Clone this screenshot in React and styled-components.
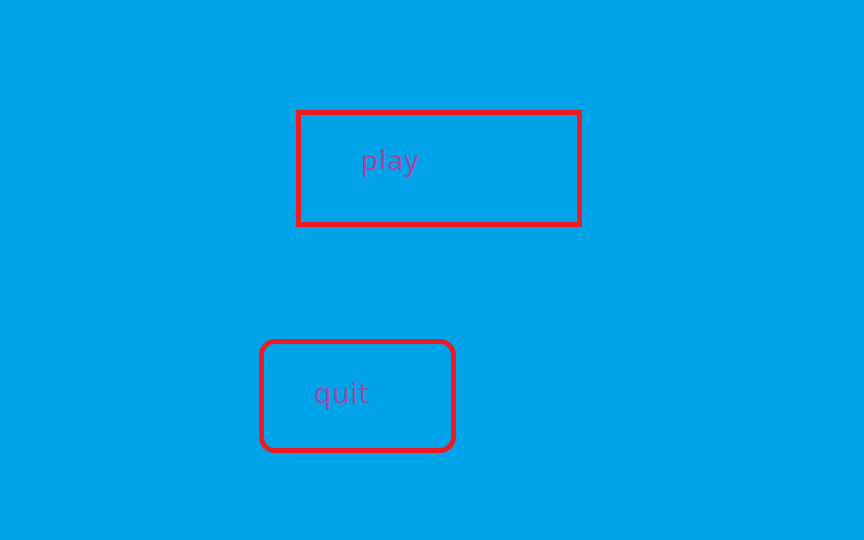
import React from "react";
import styled, { createGlobalStyle } from "styled-components";

const Global = createGlobalStyle`
  html, body { margin: 0; padding: 0; background: #00a2e8; }
  body { width: 864px; height: 540px; overflow: hidden; }
`;

const Screen = styled.div`
  width: 864px;
  height: 540px;
  background: #00a2e8;
  display: flex;
  flex-direction: column;
  align-items: flex-start;
  padding-top: 110px;
  box-sizing: border-box;
`;

const MenuButton = styled.div`
  box-sizing: border-box;
  width: ${(p) => p.$w}px;
  height: ${(p) => p.$h}px;
  margin-left: ${(p) => p.$left}px;
  margin-bottom: ${(p) => p.$gap || 0}px;
  border: 5px solid #ed1c24;
  border-radius: ${(p) => p.$radius || 0}px;
  padding: ${(p) => p.$pad};
  font-family: "Noto Sans", sans-serif;
  font-size: 28px;
  letter-spacing: 1px;
  line-height: 36px;
  color: #a349a4;
`;

export default function App() {
  return (
    <>
      <Global />
      <Screen>
        <MenuButton $w={286} $h={117} $left={296} $gap={112} $pad="26px 0 0 60px">
          play
        </MenuButton>
        <MenuButton $w={197} $h={114} $left={259} $radius={16} $pad="30px 0 0 50px">
          quit
        </MenuButton>
      </Screen>
    </>
  );
}
